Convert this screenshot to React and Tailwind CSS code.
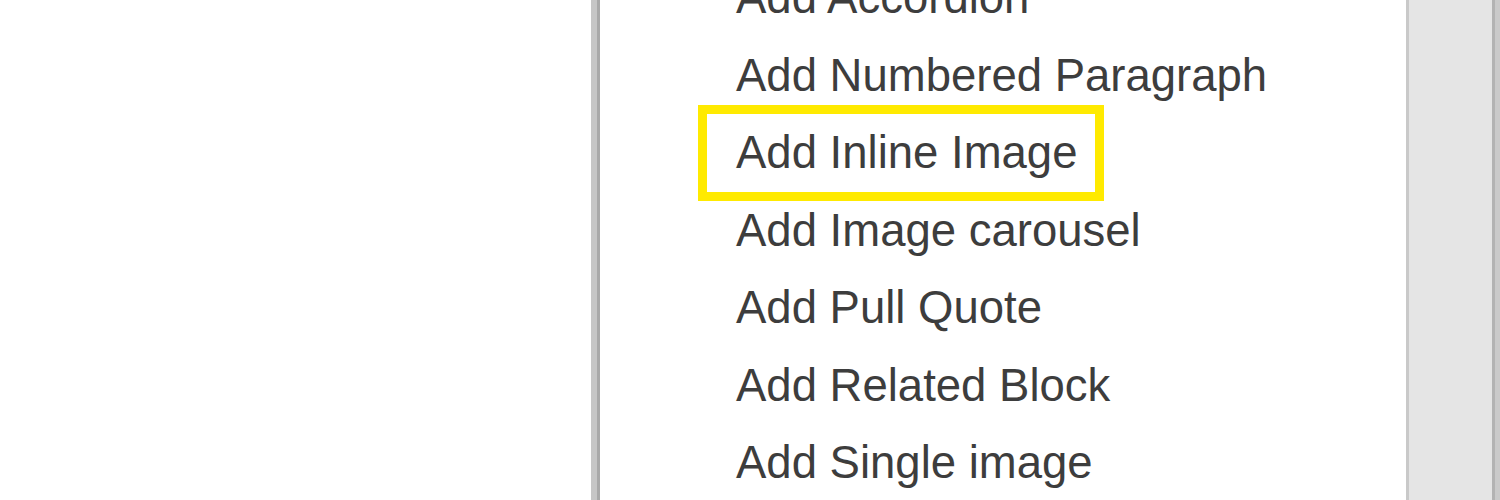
export default function App() {
  const items = [
    "Add Accordion",
    "Add Numbered Paragraph",
    "Add Inline Image",
    "Add Image carousel",
    "Add Pull Quote",
    "Add Related Block",
    "Add Single image",
  ];
  return (
    <div className="flex h-[500px] w-[1500px] overflow-hidden bg-white" style={{ fontFamily: '"Liberation Sans", Arial, sans-serif' }}>
      <div className="w-[591px] shrink-0 bg-white" />
      <div className="flex w-[9px] shrink-0">
        <div className="w-[6px] bg-[#c6c6c6]" />
        <div className="w-[3px] bg-[#a9a9a9]" />
      </div>
      <div className="flex-1 bg-white">
        <ul className="mt-[-41px] pl-[136px] text-[45.5px] leading-[77.5px] text-[#3d3d3d]">
          {items.map((t) => (
            <li key={t} className="h-[77.5px] whitespace-nowrap">
              {t === "Add Inline Image" ? (
                <span className="ml-[-29px] inline-block h-[77.5px] pl-[29px] pr-[18px] outline-[9px] outline-solid outline-[#ffea00]">
                  {t}
                </span>
              ) : (
                t
              )}
            </li>
          ))}
        </ul>
      </div>
      <div className="flex w-[94px] shrink-0">
        <div className="w-[3px] bg-[#c9c9c9]" />
        <div className="flex-1 bg-[#e5e5e5]" />
        <div className="w-[3px] bg-[#b3b3b3]" />
        <div className="w-[5px] bg-[#cacaca]" />
      </div>
    </div>
  );
}
